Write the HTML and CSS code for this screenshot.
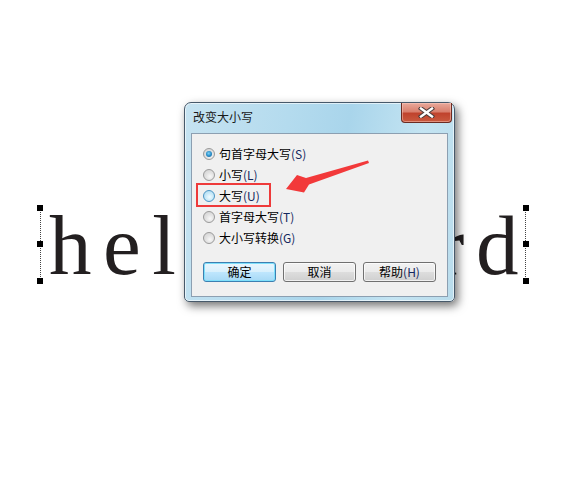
FILE: index.html
```html
<!DOCTYPE html>
<html lang="zh">
<head>
	<meta charset="UTF-8">
	<title>改变大小写</title>
	<link rel="stylesheet" href="styles.css">
</head>
<body>
	<div class="stage">
		<div class="textbox">
			<span class="handle h-tl"></span>
			<span class="handle h-ml"></span>
			<span class="handle h-bl"></span>
			<span class="handle h-tr"></span>
			<span class="handle h-mr"></span>
			<span class="handle h-br"></span>
			<div class="word">hello word</div>
		</div>

		<div class="dialog">
			<div class="titlebar">
				<div class="title">改变大小写</div>
				<div class="close-btn">
					<svg width="17" height="11" viewBox="0 0 17 11">
						<path d="M3 1.5 L14 9.5 M14 1.5 L3 9.5" stroke="#4a3b3a" stroke-width="4.4" stroke-linecap="square"/>
						<path d="M3 1.5 L14 9.5 M14 1.5 L3 9.5" stroke="#fff" stroke-width="2.4" stroke-linecap="square"/>
					</svg>
				</div>
			</div>
			<div class="client">
				<div class="options">
					<div class="option">
						<span class="radio checked"></span>
						<span>句首字母大写<span class="key">(S)</span></span>
					</div>
					<div class="option">
						<span class="radio"></span>
						<span>小写<span class="key">(L)</span></span>
					</div>
					<div class="option">
						<span class="radio hover"></span>
						<span>大写<span class="key">(U)</span></span>
					</div>
					<div class="option">
						<span class="radio"></span>
						<span>首字母大写<span class="key">(T)</span></span>
					</div>
					<div class="option">
						<span class="radio"></span>
						<span>大小写转换<span class="key">(G)</span></span>
					</div>
				</div>
				<div class="buttons">
					<div class="btn default">确定</div>
					<div class="btn">取消</div>
					<div class="btn">帮助<span class="key">(H)</span></div>
				</div>
			</div>
		</div>

		<div class="mark"></div>

		<svg class="arrow" width="571" height="482" viewBox="0 0 571 482">
			<polygon points="368,160.5 306,178 297,175 286,189 304,192.5 309,184.5 369,163" fill="#f2393a"/>
		</svg>
	</div>
</body>
</html>
```

FILE: styles.css
```css
body {
	margin: 0;
	background-color: #fff;
	font-family: "Noto Sans CJK SC", "Noto Sans", sans-serif;
}

.stage {
	position: relative;
	width: 571px;
	height: 482px;
	overflow: hidden;
	padding-top: 208px;
	box-sizing: border-box;
}

.textbox {
	position: relative;
	margin-left: 40px;
	width: 486px;
	height: 73px;
	border-left: 1px dotted #444;
	border-right: 1px dotted #444;
	box-sizing: border-box;
}

.word {
	font-family: "Liberation Serif", serif;
	font-size: 85px;
	line-height: 74px;
	letter-spacing: 11.5px;
	color: #231f20;
	padding-left: 8px;
	white-space: nowrap;
}

.handle {
	position: absolute;
	width: 6px;
	height: 6px;
	background-color: #000;
}

.h-tl { left: -4px; top: -3px; }
.h-ml { left: -4px; top: 33px; }
.h-bl { left: -4px; top: 70px; }
.h-tr { right: -4px; top: -3px; }
.h-mr { right: -4px; top: 33px; }
.h-br { right: -4px; top: 70px; }

.dialog {
	position: absolute;
	left: 184px;
	top: 102px;
	width: 271px;
	height: 200px;
	box-sizing: border-box;
	display: flex;
	flex-direction: column;
	padding: 0 6px 4px 6px;
	border: 1px solid #47596a;
	border-radius: 7px 7px 5px 5px;
	background: linear-gradient(100deg, #c6e3f1 0%, #b4dbee 35%, #a9d5eb 55%, #c4e4f2 80%, #b9dcec 100%);
	box-shadow: 3px 4px 10px rgba(0, 0, 0, 0.55), inset 0 0 0 1px rgba(255, 255, 255, 0.6);
}

.titlebar {
	height: 30px;
	display: flex;
	justify-content: space-between;
	align-items: flex-start;
}

.title {
	font-size: 12px;
	line-height: 16px;
	padding-top: 6px;
	padding-left: 2px;
	color: #1a1a1a;
}

.close-btn {
	width: 51px;
	height: 20px;
	margin-right: -4px;
	box-sizing: border-box;
	border: 1px solid #6b2b22;
	border-top: none;
	border-radius: 0 0 4px 4px;
	background: linear-gradient(to bottom, #e9a99b 0%, #d9806e 45%, #c0432d 55%, #c95a3f 100%);
	display: flex;
	align-items: center;
	justify-content: center;
	box-shadow: inset 0 0 0 1px rgba(255, 210, 200, 0.45);
}

.client {
	flex: 1;
	background-color: #f0f0f0;
	border: 1px solid #8c9fb1;
	padding: 9px 0 0 11px;
	font-size: 12px;
	color: #000;
}

.option {
	height: 21px;
	display: flex;
	align-items: center;
	line-height: 16px;
}

.key {
	color: #14285e;
}

.radio {
	width: 12px;
	height: 12px;
	box-sizing: border-box;
	margin-right: 4px;
	border-radius: 50%;
	border: 1px solid #9a9a9a;
	background: radial-gradient(circle at 60% 65%, #f8f8f8 0%, #e2e2e2 45%, #cfcfcf 100%);
	position: relative;
}

.radio.checked::after {
	content: "";
	position: absolute;
	left: 2px;
	top: 2px;
	width: 6px;
	height: 6px;
	border-radius: 50%;
	background: radial-gradient(circle at 45% 40%, #7fd3f7 0%, #2b8fc9 50%, #1b5b8e 100%);
}

.radio.hover {
	border-color: #4a94c3;
	background: radial-gradient(circle at 55% 60%, #f2fbff 0%, #c6e8f8 50%, #a6d6ef 100%);
}

.buttons {
	display: flex;
	gap: 7px;
	margin-top: 14px;
}

.btn {
	width: 73px;
	height: 20px;
	box-sizing: border-box;
	border: 1px solid #707070;
	border-radius: 3px;
	background: linear-gradient(to bottom, #f2f2f2 0%, #ebebeb 48%, #dddddd 52%, #cfcfcf 100%);
	box-shadow: inset 0 0 0 1px rgba(255, 255, 255, 0.7);
	display: flex;
	align-items: center;
	justify-content: center;
	font-size: 12px;
	line-height: 16px;
}

.btn.default {
	border-color: #3c7fb1;
	background: linear-gradient(to bottom, #eaf6fd 0%, #d9f0fc 48%, #bee6fd 52%, #a7d9f5 100%);
	box-shadow: inset 0 0 0 1px #7ee0fb;
}

.mark {
	position: absolute;
	left: 196px;
	top: 183px;
	width: 75px;
	height: 24px;
	box-sizing: border-box;
	border: 2px solid #ee3a3a;
}

.arrow {
	position: absolute;
	left: 0;
	top: 0;
}
```
